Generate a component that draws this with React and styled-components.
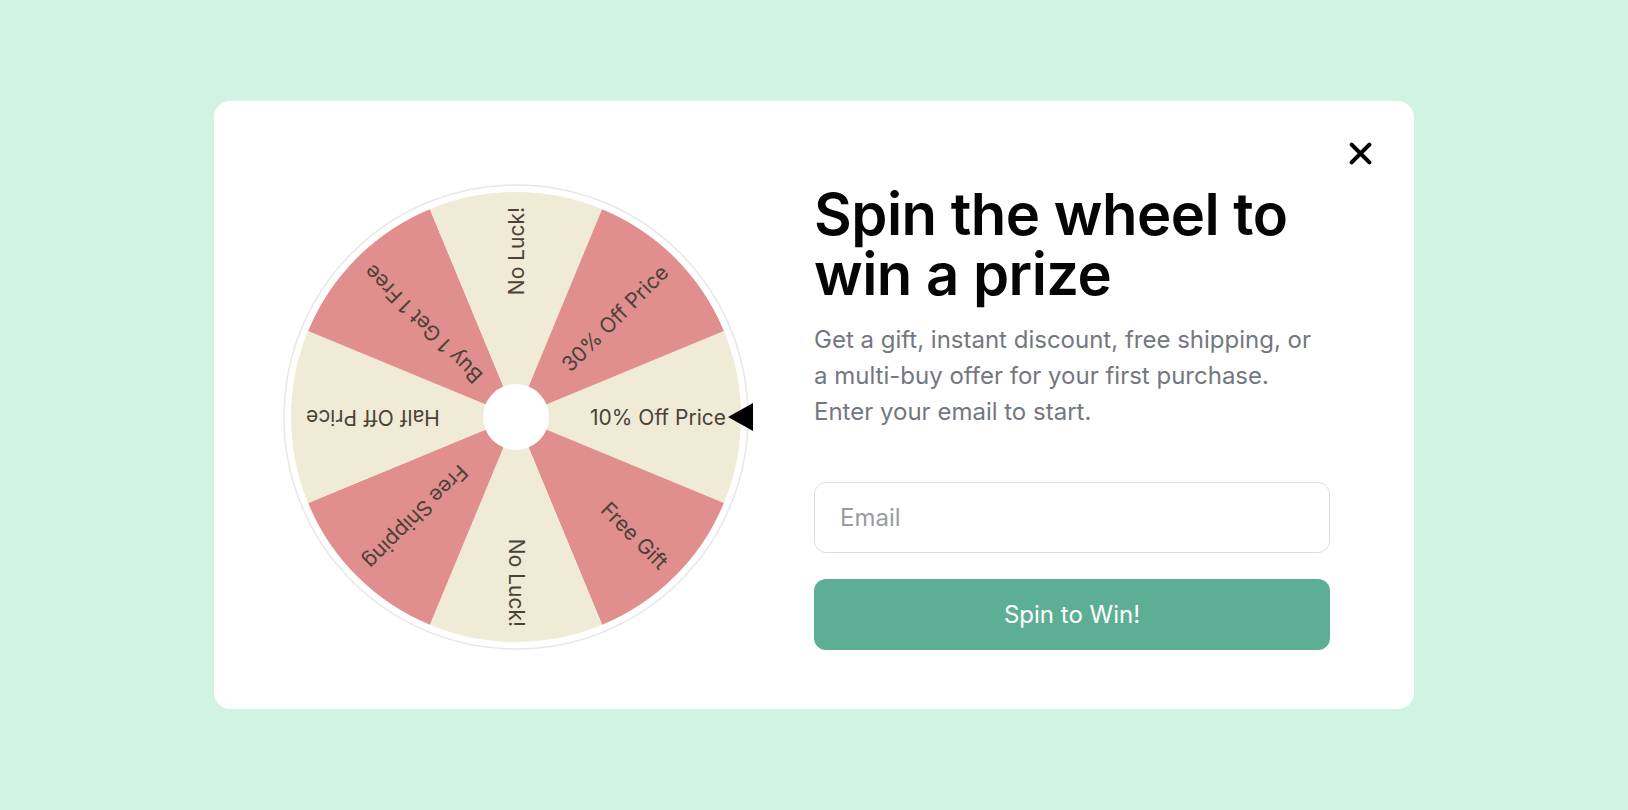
import React from 'react';
import styled, {createGlobalStyle} from 'styled-components';

const GlobalStyle = createGlobalStyle`
   html, body {
      margin: 0;
      padding: 0;
      background: #d0f3e3;
      font-family: Inter, "Noto Sans", sans-serif;
   }
`;

const Page = styled.div`
   width: 1628px;
   height: 810px;
   display: flex;
   align-items: center;
   justify-content: center;
`;

const Card = styled.div`
   position: relative;
   box-sizing: border-box;
   width: 1200px;
   height: 608px;
   background: #ffffff;
   border-radius: 16px;
   padding: 24px 0 0 69px;
   display: flex;
   align-items: center;
   gap: 65px;
`;

const CloseButton = styled.button`
   position: absolute;
   top: 40px;
   right: 41px;
   width: 25px;
   height: 25px;
   padding: 0;
   border: none;
   background: none;
   cursor: pointer;
   display: flex;
   align-items: center;
   justify-content: center;
`;

const WheelBox = styled.div`
   width: 466px;
   height: 466px;
   flex: none;
`;

const WheelSvg = styled.svg`
   display: block;
   overflow: visible;
`;

const Label = styled.text`
   font-family: Inter, "Noto Sans", sans-serif;
   font-size: 21px;
   fill: #4a4238;
`;

const Content = styled.div`
   width: 516px;
   display: flex;
   flex-direction: column;
`;

const Title = styled.h1`
   margin: 0;
   font-size: 58px;
   line-height: 60px;
   font-weight: 600;
   letter-spacing: -0.5px;
   color: #050505;
`;

const Lead = styled.p`
   margin: 18px 0 0;
   font-size: 24px;
   line-height: 36px;
   color: #737780;
`;

const EmailInput = styled.input`
   box-sizing: border-box;
   margin-top: 52px;
   width: 100%;
   height: 71px;
   padding: 0 25px;
   border: 1.5px solid #dedee2;
   border-radius: 12px;
   font-family: Inter, "Noto Sans", sans-serif;
   font-size: 24px;
   color: #222;
   outline: none;
   &::placeholder {
      color: #9a9ba3;
   }
`;

const SpinButton = styled.button`
   margin-top: 26px;
   width: 100%;
   height: 71px;
   border: none;
   border-radius: 12px;
   background: #5caf95;
   color: #ffffff;
   font-family: Inter, "Noto Sans", sans-serif;
   font-size: 24px;
   font-weight: 400;
   cursor: pointer;
`;

const segments = [
   {label: "10% Off Price", color: "#f0ebd6"},
   {label: "Free Gift", color: "#e08e8e"},
   {label: "No Luck!", color: "#f0ebd6"},
   {label: "Free Shipping", color: "#e08e8e"},
   {label: "Half Off Price", color: "#f0ebd6"},
   {label: "Buy 1 Get 1 Free", color: "#e08e8e"},
   {label: "No Luck!", color: "#f0ebd6"},
   {label: "30% Off Price", color: "#e08e8e"},
];

const R = 225;

const slice_path = (angle) => {
   const a0 = (angle - 22.5) * Math.PI / 180;
   const a1 = (angle + 22.5) * Math.PI / 180;
   const x0 = R * Math.cos(a0), y0 = R * Math.sin(a0);
   const x1 = R * Math.cos(a1), y1 = R * Math.sin(a1);
   return `M0 0 L${x0} ${y0} A${R} ${R} 0 0 1 ${x1} ${y1} Z`;
};

const Wheel = () => {
   return <WheelSvg width="466" height="466" viewBox="-233 -233 466 466">
      <circle cx="0" cy="0" r="232" fill="#ffffff" stroke="#e7e7e7" strokeWidth="1.5"/>
      {segments.map((seg, i) => <path key={`s${i}`} d={slice_path(i * 45)} fill={seg.color}/>)}
      {segments.map((seg, i) => <Label
         key={`l${i}`}
         x="210"
         y="0"
         textAnchor="end"
         dominantBaseline="central"
         transform={`rotate(${i * 45})`}
      >{seg.label}</Label>)}
      <circle cx="0" cy="0" r="33" fill="#ffffff"/>
      <path d="M212 0 L237 -14 L237 14 Z" fill="#000000"/>
   </WheelSvg>
};

const App = () => {
   return <Page>
      <GlobalStyle/>
      <Card>
         <CloseButton aria-label="Close">
            <svg width="25" height="25" viewBox="0 0 24 24">
               <path d="M3.5 3.5 L20.5 20.5 M20.5 3.5 L3.5 20.5" stroke="#000" strokeWidth="4" strokeLinecap="round"/>
            </svg>
         </CloseButton>
         <WheelBox>
            <Wheel/>
         </WheelBox>
         <Content>
            <Title>Spin the wheel to win a prize</Title>
            <Lead>Get a gift, instant discount, free shipping, or a multi-buy offer for your first purchase. Enter your email to start.</Lead>
            <EmailInput type="email" placeholder="Email"/>
            <SpinButton>Spin to Win!</SpinButton>
         </Content>
      </Card>
   </Page>
};

export default App;
